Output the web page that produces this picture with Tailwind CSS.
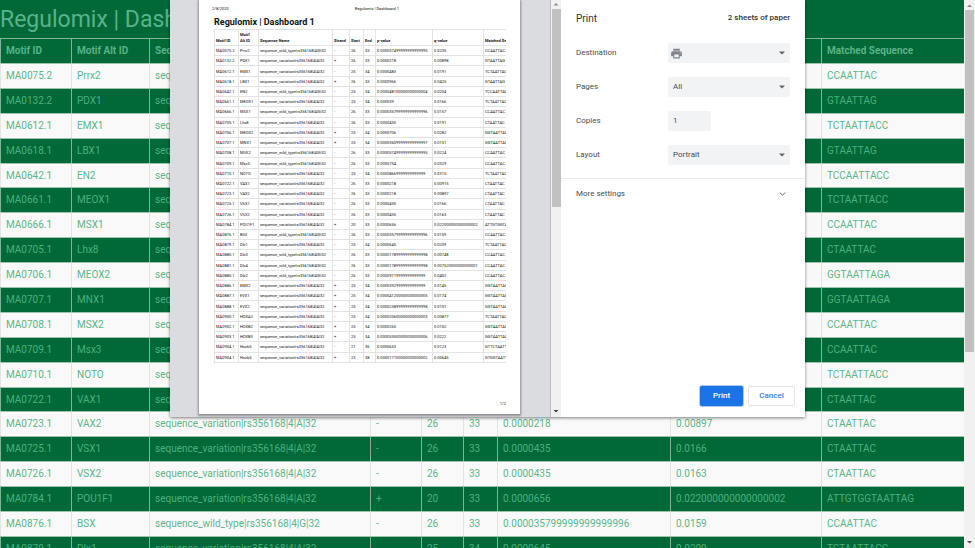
<!DOCTYPE html>
<html lang="en">
<head>
<meta charset="utf-8">
<title>Regulomix | Dashboard 1</title>
<script src="https://cdn.jsdelivr.net/npm/@tailwindcss/browser@4"></script>
</head>
<body class="relative h-screen overflow-hidden bg-[#f9f9f9] font-['Roboto',sans-serif]">

<!-- Dashboard -->
<div class="flex h-full">
  <main class="min-w-0 flex-1 overflow-hidden">
    <h1 class="h-[38px] bg-[#006937] text-[23px] leading-10 text-[#59b38a]">Regulomix | Dashboard 1</h1>
    <table class="h-[523px] w-full table-fixed border-separate border-spacing-0 text-left text-[10px] leading-4 whitespace-nowrap">
      <colgroup>
        <col class="w-[71px]"><col class="w-[78px]"><col class="w-[221px]"><col class="w-[51px]"><col class="w-[42px]"><col class="w-[34px]"><col class="w-[173px]"><col class="w-[151px]"><col>
      </colgroup>
      <thead id="main-head"></thead>
      <tbody id="main-body"></tbody>
    </table>
  </main>
  <div class="flex w-[11px] flex-col items-center bg-[#f1f1f1]" aria-hidden="true">
    <svg class="h-[10px] w-[11px]" viewBox="0 0 11 10"><path d="M3 7 5.500 4.500 8 7Z" fill="#8b8b8b"/></svg>
    <div class="h-[342px] w-[9px] bg-[#c1c1c1]"></div>
    <svg class="mt-auto h-[11px] w-[11px]" viewBox="0 0 11 11"><path d="M3 4 5.500 6.500 8 4Z" fill="#505050"/></svg>
  </div>
</div>

<!-- Print dialog -->
<div role="dialog" aria-label="Print" class="absolute inset-x-0 top-0 mx-auto flex w-[635px] bg-white shadow-[0_1px_3px_rgba(0,0,0,0.5)]">
  <div class="min-w-0 flex-1 bg-[#dadce0] pr-[30px] pb-[3px] pl-[29px]">
    <article class="relative flex h-[414px] flex-col bg-white pr-[14px] pl-[15px] text-[4px] text-[#111] shadow-[0_1px_2px_1px_rgba(0,0,0,0.35)]">
      <header class="flex h-[14px] pt-[6px] leading-[6px]">
        <span class="-ml-[2px] flex-1">2/8/2020</span>
        <span>Regulomix | Dashboard 1</span>
        <span class="w-[107px]"></span>
      </header>
      <h2 class="h-[15px] text-[9px] leading-4 font-bold text-[#111]">Regulomix | Dashboard 1</h2>
      <div class="overflow-hidden">
        <table class="h-[334px] w-full table-fixed border-separate border-spacing-0 border-b border-[#e3e3e3] text-left leading-[5px] whitespace-nowrap">
          <colgroup>
            <col class="w-[24px]"><col class="w-[20px]"><col class="w-[74px]"><col class="w-[17px]"><col class="w-[14px]"><col class="w-[12px]"><col class="w-[57px]"><col class="w-[51px]"><col>
          </colgroup>
          <thead id="sheet-head"></thead>
          <tbody id="sheet-body"></tbody>
        </table>
      </div>
      <footer class="mt-auto pb-[7px] text-right leading-[6px]">1/2</footer>
    </article>
  </div>
  <div class="flex w-[11px] flex-col items-center border-l border-[#bdbdbd] bg-[#f1f1f1]" aria-hidden="true">
    <svg class="h-[9px] w-[10px]" viewBox="0 0 10 9"><path d="M2.500 5.500 5 3 7.500 5.500Z" fill="#8b8b8b"/></svg>
    <div class="h-[198px] w-[9px] bg-[#c1c1c1]"></div>
    <svg class="mt-auto h-[11px] w-[10px]" viewBox="0 0 10 11"><path d="M2.500 4 5 6.500 7.500 4Z" fill="#404040"/></svg>
  </div>
  <form class="flex w-[244px] flex-col text-[8px] text-[#4a4d51]" onsubmit="return false">
    <div class="flex h-[36px] items-center justify-between pr-[15px] pl-[15px]">
      <h2 class="text-[10px] text-[#303134]">Print</h2>
      <span class="font-medium text-[#303134]">2 sheets of paper</span>
    </div>
    <div class="border-b border-[#ececec] pr-[15px] pb-[6px] pl-[15px]">
      <div class="flex h-[34px] items-center">
        <label for="dest" class="flex-1">Destination</label>
        <div class="relative w-[122px]">
          <select id="dest" class="block h-5 w-full appearance-none rounded-[2px] bg-[#f1f3f4] pl-5"><option></option></select>
          <svg class="pointer-events-none absolute top-1 left-[2px] size-[13px]" viewBox="0 0 24 24" fill="#80868b"><path d="M19 8H5c-1.660 0-3 1.340-3 3v6h4v4h12v-4h4v-6c0-1.660-1.340-3-3-3zm-3 11H8v-5h8v5zm3-7c-.55 0-1-.45-1-1s.45-1 1-1 1 .45 1 1-.45 1-1 1zm-1-9H6v4h12V3z"/></svg>
          <svg class="pointer-events-none absolute top-2 right-[5px] h-1 w-[6px]" viewBox="0 0 6 4"><path d="M0 .5H6L3 3.500Z" fill="#5f6368"/></svg>
        </div>
      </div>
      <div class="flex h-[34px] items-center">
        <label for="pages" class="flex-1">Pages</label>
        <div class="relative w-[122px]">
          <select id="pages" class="block h-5 w-full appearance-none rounded-[2px] bg-[#f1f3f4] pl-[5px]"><option>All</option></select>
          <svg class="pointer-events-none absolute top-2 right-[5px] h-1 w-[6px]" viewBox="0 0 6 4"><path d="M0 .5H6L3 3.500Z" fill="#5f6368"/></svg>
        </div>
      </div>
      <div class="flex h-[34px] items-center">
        <label for="copies" class="flex-1">Copies</label>
        <div class="w-[122px]">
          <input id="copies" type="text" inputmode="numeric" value="1" class="block h-5 w-[43px] rounded-[2px] bg-[#f1f3f4] pb-px pl-[5px]">
        </div>
      </div>
      <div class="flex h-[34px] items-center">
        <label for="layout" class="flex-1">Layout</label>
        <div class="relative w-[122px]">
          <select id="layout" class="block h-5 w-full appearance-none rounded-[2px] bg-[#f1f3f4] pl-[5px]"><option>Portrait</option></select>
          <svg class="pointer-events-none absolute top-2 right-[5px] h-1 w-[6px]" viewBox="0 0 6 4"><path d="M0 .5H6L3 3.500Z" fill="#5f6368"/></svg>
        </div>
      </div>
    </div>
    <button type="button" class="flex h-[30px] items-center justify-between pr-[19px] pl-[15px]">
      <span>More settings</span>
      <svg class="h-2 w-[7px]" viewBox="0 0 7 8" fill="none" stroke="#5f6368"><path d="M.8 2.500 3.500 5.200 6.200 2.500"/></svg>
    </button>
    <div class="mt-auto flex justify-end gap-[5px] pr-[10px] pb-[11px] font-medium">
      <button type="submit" class="h-5 w-[43px] rounded-[2px] bg-[#1a73e8] text-white ring-1 ring-[#a9cbf7]">Print</button>
      <button type="button" class="h-5 w-[47px] rounded-[2px] border border-[#e3e5e8] text-[#3b7de8]">Cancel</button>
    </div>
  </form>
</div>

<script>
const W = 'sequence_wild_type|rs356168|4|G|32', V = 'sequence_variation|rs356168|4|A|32';
const columns = ['Motif ID', 'Motif Alt ID', 'Sequence Name', 'Strand', 'Start', 'End', 'p-value', 'q-value', 'Matched Sequence'];
const rows = [
  ['MA0075.2','Prrx2',W,'-',26,33,'0.000057499999999999995','0.0235','CCAATTAC'],
  ['MA0132.2','PDX1',V,'+',26,33,'0.0000218','0.00898','GTAATTAG'],
  ['MA0612.1','EMX1',V,'-',25,34,'0.0000483','0.0191','TCTAATTACC'],
  ['MA0618.1','LBX1',V,'+',26,33,'0.0000966','0.0425','GTAATTAG'],
  ['MA0642.1','EN2',W,'-',25,34,'0.000048100000000000004','0.0204','TCCAATTACC'],
  ['MA0661.1','MEOX1',V,'-',25,34,'0.000039','0.0166','TCTAATTACC'],
  ['MA0666.1','MSX1',W,'-',26,33,'0.000035799999999999996','0.0157','CCAATTAC'],
  ['MA0705.1','Lhx8',V,'-',26,33,'0.0000435','0.0191','CTAATTAC'],
  ['MA0706.1','MEOX2',V,'+',25,34,'0.0000706','0.0282','GGTAATTAGA'],
  ['MA0707.1','MNX1',V,'+',25,34,'0.000036099999999999997','0.0151','GGTAATTAGA'],
  ['MA0708.1','MSX2',W,'-',26,33,'0.000057499999999999995','0.0224','CCAATTAC'],
  ['MA0709.1','Msx3',W,'-',26,33,'0.0000754','0.0329','CCAATTAC'],
  ['MA0710.1','NOTO',V,'-',25,34,'0.00008669999999999999','0.0315','TCTAATTACC'],
  ['MA0722.1','VAX1',V,'-',26,33,'0.0000218','0.00915','CTAATTAC'],
  ['MA0723.1','VAX2',V,'-',26,33,'0.0000218','0.00897','CTAATTAC'],
  ['MA0725.1','VSX1',V,'-',26,33,'0.0000435','0.0166','CTAATTAC'],
  ['MA0726.1','VSX2',V,'-',26,33,'0.0000435','0.0163','CTAATTAC'],
  ['MA0784.1','POU1F1',V,'+',20,33,'0.0000656','0.022000000000000002','ATTGTGGTAATTAG'],
  ['MA0876.1','BSX',W,'-',26,33,'0.000035799999999999996','0.0159','CCAATTAC'],
  ['MA0879.1','Dlx1',V,'-',25,34,'0.0000645','0.0209','TCTAATTACC'],
  ['MA0880.1','Dlx3',W,'-',26,33,'0.000017899999999999998','0.00748','CCAATTAC'],
  ['MA0881.1','Dlx4',W,'-',26,33,'0.000017899999999999998','0.007520000000000001','CCAATTAC'],
  ['MA0885.1','Dlx2',W,'-',26,33,'0.00009719999999999999','0.0402','CCAATTAC'],
  ['MA0886.1','EMX2',V,'+',25,34,'0.00003929999999999999','0.0145','GGTAATTAGA'],
  ['MA0887.1','EVX1',V,'+',25,34,'0.000041200000000000005','0.0174','GGTAATTAGA'],
  ['MA0888.1','EVX2',V,'+',25,34,'0.000023899999999999998','0.0101','GGTAATTAGA'],
  ['MA0900.1','HOXA2',V,'-',25,34,'0.000020600000000000003','0.00877','TCTAATTACC'],
  ['MA0902.1','HOXB2',V,'+',25,34,'0.0000265','0.0102','GGTAATTAGA'],
  ['MA0903.1','HOXB3',V,'+',25,34,'0.000053500000000000006','0.0222','GGTAATTAGA'],
  ['MA0904.1','Hoxb5',V,'-',21,36,'0.0000653','0.0123','GTTCTAATTAGCC'],
  ['MA0904.1','Hoxb5',V,'+',23,38,'0.000017100000000000002','0.00645','GTGGTAATTAGCC']
];
const cells = (tag, values, cls) => values.map(v => `<${tag} class="${cls}">${v}</${tag}>`).join('');

document.getElementById('main-head').innerHTML =
  `<tr class="h-[25px] bg-[#006937] text-[#59b38a]">${cells('th', columns, 'h-[25px] overflow-hidden border-t border-l border-[#7fb49b] pl-[5px] font-bold')}</tr>`;
document.getElementById('main-body').innerHTML = rows.slice(0, 20).map((r, i) => i % 2
  ? `<tr class="bg-[#006937] text-[#4bb07f]">${cells('td', r, 'border-t border-l border-t-[#9cc4af] border-l-[#7fb49b] pl-[5px]')}</tr>`
  : `<tr class="bg-[#f9f9f9] text-[#5cb58b]">${cells('td', r, 'border-t border-l border-t-[#9cc4af] border-l-[#e4e4e4] pl-[5px]')}</tr>`).join('');

document.getElementById('sheet-head').innerHTML =
  `<tr>${cells('th', columns.map(c => c.replace('Motif Alt', 'Motif<br>Alt')), 'h-4 border-t border-l border-[#e3e3e3] pl-[1px] pb-px align-bottom leading-[6px] font-bold')}</tr>`;
document.getElementById('sheet-body').innerHTML = rows.map(r =>
  `<tr>${cells('td', r, 'border-t border-l border-[#e3e3e3] pl-[1px]')}</tr>`).join('');
</script>
</body>
</html>
